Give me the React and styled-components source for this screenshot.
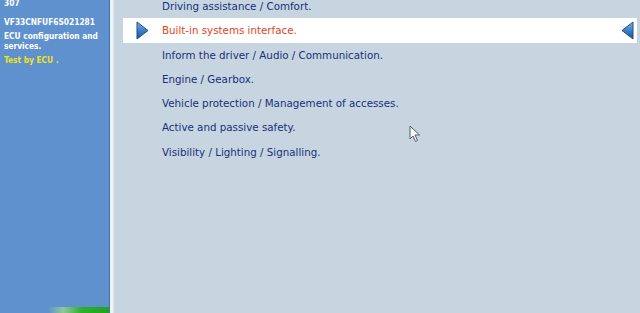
import React from "react";
import styled, { createGlobalStyle } from "styled-components";

const Global = createGlobalStyle`
  html, body { margin: 0; padding: 0; overflow: hidden; }
  body { font-family: "DejaVu Sans", Verdana, sans-serif; }
`;

const Screen = styled.div`
  display: flex;
  width: 640px;
  height: 313px;
  overflow: hidden;
  background: #c6d5e0;
`;

const Sidebar = styled.aside`
  width: 109px;
  flex: none;
  display: flex;
  flex-direction: column;
  background: #5e91cd;
  border-right: 1px solid #4574ad;
  color: #ffffff;
  font-family: "DejaVu Sans Condensed", "DejaVu Sans", sans-serif;
  font-stretch: condensed;
  font-size: 8.3px;
  font-weight: bold;
  line-height: 10px;
`;

const SideInfo = styled.div`
  display: flex;
  flex-direction: column;
  padding: 0 4px;
  margin-top: -2px;
`;

const SideLine = styled.div`
  margin-top: ${(p) => p.$gap || 0}px;
  color: ${(p) => (p.$accent ? "#f2e21a" : "#ffffff")};
  white-space: pre-line;
`;

const ProgressStrip = styled.div`
  margin-top: auto;
  height: 6px;
  margin-left: 48px;
  background: linear-gradient(90deg, rgba(94,145,205,0) 0%, #8fc79a 25%, #2fae2f 55%, #1ea51e 100%);
`;

const Divider = styled.div`
  width: 4px;
  flex: none;
  background: linear-gradient(90deg, #e9eff4 0%, #f3f7fa 50%, #d4e0e8 100%);
`;

const Content = styled.main`
  position: relative;
  flex: 1;
  padding: 0 3px 0 9px;
  display: flex;
  flex-direction: column;
`;

const MenuList = styled.ul`
  list-style: none;
  margin: -6px 0 0;
  padding: 0;
  display: flex;
  flex-direction: column;
`;

const MenuRow = styled.li`
  display: flex;
  align-items: center;
  height: ${(p) => (p.$selected ? 25 : 24.2)}px;
  margin-top: ${(p) => (p.$selected ? -0.5 : 0)}px;
  background: ${(p) => (p.$selected ? "#ffffff" : "transparent")};
  color: ${(p) => (p.$selected ? "#e2431c" : "#1b2f7d")};
  font-size: 10.3px;
`;

const MarkerSlot = styled.span`
  width: 39px;
  flex: none;
  display: flex;
  align-items: center;
  padding-left: 13px;
  box-sizing: border-box;
`;

const Label = styled.span`
  flex: 1;
  white-space: nowrap;
`;

const EndSlot = styled.span`
  width: 16px;
  flex: none;
  display: flex;
  align-items: center;
`;

const Cursor = styled.svg`
  position: absolute;
  left: 295px;
  top: 125px;
`;

const Arrow = ({ dir }) => (
  <svg width="13" height="19" viewBox="0 0 13 19">
    <defs>
      <linearGradient id={`ag-${dir}`} x1="0" y1="0" x2="0" y2="1">
        <stop offset="0" stopColor="#7fb3e6" />
        <stop offset="0.5" stopColor="#3f80c8" />
        <stop offset="1" stopColor="#1d4f95" />
      </linearGradient>
    </defs>
    {dir === "right" ? (
      <path d="M1 1 L12 9.5 L1 18 Z" fill={`url(#ag-${dir})`} stroke="#1f4c8a" strokeWidth="1" strokeLinejoin="round" />
    ) : (
      <path d="M12 1 L1 9.5 L12 18 Z" fill={`url(#ag-${dir})`} stroke="#1f4c8a" strokeWidth="1" strokeLinejoin="round" />
    )}
  </svg>
);

const items = [
  "Driving assistance / Comfort.",
  "Built-in systems interface.",
  "Inform the driver / Audio / Communication.",
  "Engine / Gearbox.",
  "Vehicle protection / Management of accesses.",
  "Active and passive safety.",
  "Visibility / Lighting / Signalling.",
];

export default function App() {
  return (
    <>
      <Global />
      <Screen>
        <Sidebar>
          <SideInfo>
            <SideLine>307</SideLine>
            <SideLine $gap={9}>VF33CNFUF6S021281</SideLine>
            <SideLine $gap={4}>{"ECU configuration and\nservices."}</SideLine>
            <SideLine $gap={4} $accent>Test by ECU .</SideLine>
          </SideInfo>
          <ProgressStrip />
        </Sidebar>
        <Divider />
        <Content>
          <MenuList>
            {items.map((t, i) => (
              <MenuRow key={t} $selected={i === 1}>
                <MarkerSlot>{i === 1 && <Arrow dir="right" />}</MarkerSlot>
                <Label>{t}</Label>
                <EndSlot>{i === 1 && <Arrow dir="left" />}</EndSlot>
              </MenuRow>
            ))}
          </MenuList>
          <Cursor width="12" height="18" viewBox="0 0 12 18">
            <path d="M1 1 L1 14 L4 11 L6.5 16.5 L8.5 15.5 L6 10 L10.5 10 Z" fill="#f4f6f8" stroke="#55606a" strokeWidth="1" strokeLinejoin="round" />
          </Cursor>
        </Content>
      </Screen>
    </>
  );
}
